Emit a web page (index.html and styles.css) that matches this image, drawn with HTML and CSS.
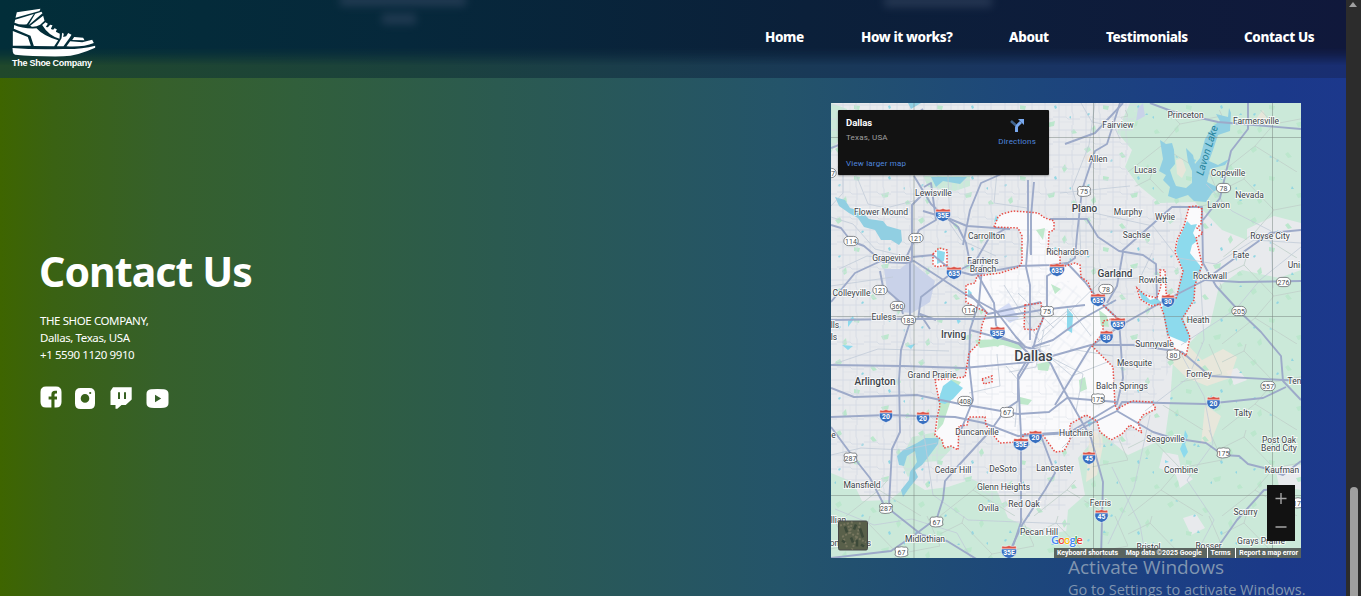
FILE: index.html
```html
<!DOCTYPE html>
<html lang="en">
<head>
<meta charset="utf-8">
<title>The Shoe Company</title>
<link rel="stylesheet" href="styles.css">
</head>
<body>
<div class="window">
<div class="page">
<header class="header">
  <i class="haze haze-a"></i><i class="haze haze-b"></i><i class="haze haze-c"></i>
  <a class="brand">
    <svg class="shoe" viewBox="36 25 251 147" aria-hidden="true">
      <g fill="#fff">
        <path d="M50 38L121 27L118 34L46 54ZM45 60L101 43L80 74Q60 77 43 69ZM105 42L124 36L127 41L85 77ZM90 78L129 48L133 63L120 75Q108 82 95 81Z"/>
        <path d="M42 76Q68 88 109 86Q128 108 174 122L162 140L101 139L91 108L41 87ZM38 94L83 112L92 138H38Z"/>
        <path d="M126 76L136 68L143 72L137 82L143 83L150 75L157 77L152 88L159 90L163 86L170 89L167 96L179 102L178 117Q145 108 126 76ZM186 99L191 102L189 112L198 110L204 100L214 105L208 115L190 140L170 140L184 116ZM222 112L249 114L253 122L216 121ZM210 125L246 128L276 120L281 130Q250 143 199 140ZM37 145Q105 151 190 148Q245 149 285 138L285 144Q230 169 190 170Q100 171 45 165Q39 164 38 157Z"/>
      </g>
    </svg>
    <span class="brand-name">The Shoe Company</span>
  </a>
  <nav class="nav"><a>Home</a><a>How it works?</a><a>About</a><a>Testimonials</a><a>Contact Us</a></nav>
</header>
<main class="contact">
  <section class="details">
    <h1>Contact Us</h1>
    <p>THE SHOE COMPANY,<br>Dallas, Texas, USA<br>+1 5590 1120 9910</p>
    <div class="social">
      <svg class="fb" viewBox="0 0 22 22"><path fill="#fff" fill-rule="evenodd" d="M6 .5H16Q21.5 .5 21.5 6V16Q21.5 21.5 16 21.5H14.5V13.5H17V10.5H14.5V9Q14.5 7.6 16 7.6H17V4.8H15Q11.4 4.8 11.4 8.4V10.5H8.6V13.5H11.4V21.5H6Q.5 21.5 .5 16V6Q.5 .5 6 .5Z"/></svg>
      <svg class="ig" viewBox="0 0 20 21"><path fill="#fff" fill-rule="evenodd" d="M5.5 0H14.5Q20 0 20 5.5V15.5Q20 21 14.5 21H5.5Q0 21 0 15.5V5.5Q0 0 5.5 0ZM10 6.1A4.3 4.3 0 1 0 10 14.7A4.3 4.3 0 0 0 10 6.1ZM15.2 3.9A1.1 1.1 0 1 0 15.2 6.1A1.1 1.1 0 0 0 15.2 3.9Z"/></svg>
      <svg class="tw" viewBox="0 0 22 22"><path fill="#fff" fill-rule="evenodd" d="M3 .3H21.7V12.5L15.7 18H11.5L7.3 21.7H5.5V18H.5V4ZM8 5.2V12H10V5.2ZM14 5.2V12H16V5.2Z"/></svg>
      <svg class="yt" viewBox="0 0 23 19"><path fill="#fff" fill-rule="evenodd" d="M5 .3Q11.5 -.3 18 .3Q22.5 .7 22.5 5V14Q22.5 18.3 18 18.7Q11.5 19.3 5 18.7Q.5 18.3 .5 14V5Q.5 .7 5 .3ZM9 5.8V13.2L15.2 9.5Z"/></svg>
    </div>
  </section>
  <section class="map">
  <svg class="map-art" viewBox="831 103 470 455">
    <defs>
      <pattern id="streets" width="27" height="25" patternUnits="userSpaceOnUse"><path d="M0 5H27M0 17H13L15 19H27M6 0V25M19 0V12L20 14V25" fill="none" stroke="#d3d9e3" stroke-width=".8"/><path d="M0 11H6M13 5V17M6 22H20" fill="none" stroke="#dbe0e8" stroke-width=".6"/></pattern>
      <pattern id="streets2" width="17" height="15" patternUnits="userSpaceOnUse" patternTransform="rotate(38)"><path d="M0 4H17M5 0V15M12 4V15" fill="none" stroke="#d3dae6" stroke-width=".7"/></pattern>
      <pattern id="specks" width="83" height="71" patternUnits="userSpaceOnUse"><path d="M5 7l5-3 2 4-4 3zM40 12l3-2 4 5-4 1zM24 34l6 1-1 4-5-1zM66 26l3-4 2 5-3 4zM51 52l8-2-1 5-5 1zM12 58l4-4 1 6-3 2zM75 60l3-2 3 4-5 1z" fill="#bce7cd"/><path d="M31 19l2-2 1 2-2 1zM58 35l2-1 1 3-2 1zM8 43l2-1 1 1-2 2zM73 46l2-1v3z" fill="#91d6e3"/></pattern>
      <pattern id="rural" width="94" height="86" patternUnits="userSpaceOnUse"><path d="M0 18L22 7L52 38L94 30M22 7L24 0M52 38L33 60L0 86M33 60L75 86M94 30L81 0" fill="none" stroke="#bfcfc9" stroke-width=".8"/><path d="M17 29l2-2 1 2zM69 17l1-3 2 3zM47 71l2-1 1 2zM82 53l2-2v3z" fill="#92d5df"/></pattern>
      <g id="hwy"><path d="M-6-6Q-3-5 0-6.500Q3-5 6-6L6.500-3H-6.500Z" fill="#dc5549" stroke="#fff" stroke-width=".5"/><path d="M-6.500-3H6.500Q8 4 0 6.600Q-8 4-6.500-3Z" fill="#386fc0" stroke="#fff" stroke-width=".5"/></g>
      <g id="hwy3"><path d="M-7-6Q-3-5 0-6.500Q3-5 7-6L7.500-3H-7.500Z" fill="#dc5549" stroke="#fff" stroke-width=".5"/><path d="M-7.500-3H7.500Q9 4 0 6.600Q-9 4-7.500-3Z" fill="#386fc0" stroke="#fff" stroke-width=".5"/></g>
      <rect id="oval" x="-7.2" y="-4.6" width="14.4" height="9.2" rx="4.6" fill="#fff" stroke="#686c70" stroke-width=".8"/>
      <path id="us" d="M-5-5Q-2.5-4.5 0-5.3Q2.5-4.5 5-5L6.5-3Q5.5 0 6.5 3Q4 5-1 5Q-5 5-6.5 3Q-5.5 0-6.5-3Z" fill="#fff" stroke="#686c70" stroke-width=".8"/>
      <path id="limits" d="M994 227L998 217L1002 214L1013 211L1027 212L1038 213L1045 218L1054 221L1054 230L1049 232L1048 252L1060 256V267L1065 266L1075 263L1080 265L1081 277L1088 282L1092 293L1103 305L1117 318L1103 321V333L1092 346L1113 367L1115 405L1117 409L1132 401L1152 402L1156 409L1143 415L1138 423L1142 433L1130 425L1122 434L1111 440L1100 432L1097 421L1086 415L1070 424L1070 440L1064 451L1055 452L1045 438L1041 434L1025 434L1018 442L1000 443L994 436L986 425L985 417H969L967 425L959 426L958 450L951 446L944 448L942 440L935 435L937 418L940 405L937 390L935 380L955 378L965 377L969 353L979 343L982 325L987 312L975 307L966 302V285L975 283L977 276L1000 273L1019 267L1022 262V236L1018 228ZM933 254L939 248L947 250V265L936 267L933 264ZM1189 207L1196 206L1202 209L1201 224L1197 228L1203 233L1196 238L1200 255L1202 265L1195 285L1194 300L1182 319L1190 337L1186 356L1174 348L1168 335L1164 315L1160 304L1151 306L1140 299L1137 288L1145 295L1157 298L1161 286L1160 270L1165 270L1166 293L1176 299L1183 271L1175 252L1177 240L1184 226Z"/>
    </defs>
    <path d="M831 103H1301V558H831Z" fill="#e8eaed"/>
    <g fill="#cbe9d9">
      <path d="M1130 103H1301V235L1270 224L1247 240L1222 230L1195 202L1160 203L1138 185L1125 167L1132 150L1117 132Z"/>
      <path d="M1197 335L1210 325L1219 286L1242 270L1279 278L1301 270V558H1064L1068 510L1085 495L1078 458L1100 432L1128 455L1165 438L1170 402L1173 361Z"/>
      <path d="M831 473L853 482L862 501L890 500L912 482L925 490L948 487L972 479L997 491L1008 518L1044 535L1071 530L1078 558H831ZM831 103L847 109L843 132L831 153ZM923 176H970V186L955 191L928 187ZM912 437L946 430L957 443L940 461L925 462L908 477L900 461Z"/>
    </g>
    <g fill="#e8eaed"><path d="M1163 452L1178 455L1181 469L1193 479L1180 488L1176 475L1159 468ZM1226 371L1237 368L1247 380L1234 385ZM1247 229L1274 216L1301 223V247L1262 257L1247 247ZM1183 518L1196 514L1205 528L1191 535ZM1275 467L1301 465V490L1279 486Z"/></g>
    <g fill="#efe6db" opacity=".8"><path d="M1166 358L1187 344L1202 360L1223 349L1237 357L1230 378L1207 386L1187 378ZM1090 430L1102 435L1103 446L1097 475L1086 482ZM1205 405L1221 416L1211 442L1201 444L1203 425ZM1083 157L1094 151L1090 164ZM874 142L885 145L881 164L872 162ZM1255 120L1263 110L1270 127Z"/><path d="M1176 160L1182 158L1186 170L1182 178L1177 174Z"/></g>
    <path d="M831 103H1301V558H831Z" fill="url(#specks)"/>
    <path d="M831 103H1138L1125 167L1145 197L1190 207L1180 260L1185 340L1130 445L1070 450L1065 510H1000L970 480L915 484L880 504L831 470Z" fill="url(#streets)"/>
    <path d="M1120 110H1301V558H1070L1100 436L1170 402L1210 325L1225 260L1195 200L1130 185ZM831 480H1080V558H831Z" fill="url(#rural)"/>
    <path d="M884 269L900 269L910 261L935 281L930 302L912 313L901 312L893 295L887 290ZM1138 108L1143 103L1145 116L1136 121Z" fill="#c9d2e9"/>
    <use href="#limits" fill="#fafafc"/>
    <path d="M1025 305L1041 303L1043 320L1036 330L1024 329ZM982 379L992 376L992 382L984 384Z" fill="#e8eaed"/>
    <g opacity=".55"><path d="M992 229H1048V300L1030 320L987 312ZM980 328L1040 340L1105 405L1086 415L1066 440L1000 438L970 405Z" fill="url(#streets)"/><path d="M996 290L1075 280L1100 350L1060 400L1010 340Z" fill="url(#streets2)"/></g>
    <path d="M975 340L1003 339L1024 345L1021 350L1003 345L980 348ZM1037 364L1051 361L1048 371L1038 370ZM1099 310L1107 316L1109 327L1101 326ZM1051 284L1061 289L1055 294ZM952 379L961 382L947 402L940 394ZM1036 230L1045 228L1043 240ZM993 338L1003 341L998 347L990 344ZM1079 380L1085 377L1087 389L1080 392ZM1020 397L1032 400L1028 405L1020 404ZM940 401L951 400L943 424L937 431Z" fill="#bfe8cb"/>
    <path d="M996 311L1009 303L1019 318L1010 323Z" fill="#d4dcf5"/>
    <g fill="#91cfe2">
      <path d="M835 197L845 200L850 208L861 211L869 219L883 221L887 226L901 230L902 241L899 245L891 240L881 240L875 230L864 227L858 218L849 213L839 206Z"/>
      <path d="M931 177H967L960 184L943 181L936 187ZM908 103H921L911 109Z"/>
      <path d="M1160 140L1166 144L1172 143L1174 150L1175 164L1170 170L1173 179L1176 186L1186 188L1192 183L1192 171L1188 162L1186 148L1193 155L1195 164L1200 158L1205 139L1213 126L1220 121L1216 114L1228 117L1229 108L1231 113L1230 131L1218 135L1213 150L1209 161L1218 165L1229 159L1225 165L1210 169L1207 182L1219 188L1212 193L1206 202L1194 201L1188 195L1176 199L1168 196L1170 187L1163 180L1166 175L1159 171L1163 159Z"/>
      <path d="M899 465L897 456L903 450L917 443L925 438L939 438L938 444L929 456L922 465L915 470L918 477L910 487L903 497L901 490L909 480L910 472L917 462L915 451L907 456L904 466Z"/>
    </g>
    <g fill="#8ddaed">
      <path d="M1187 221L1191 225L1197 224L1193 233L1197 241L1192 245L1190 253L1202 268L1195 285L1194 299L1183 318L1190 337L1186 343L1167 335L1162 307L1170 296L1176 298L1183 271L1176 251L1178 240ZM1138 289L1145 295L1150 300L1157 298L1162 303L1152 305L1142 300ZM943 386L951 380L963 388L953 399L945 404L938 402ZM937 250L945 252L944 261L937 264ZM1067 308L1073 315L1072 333L1067 330Z"/>
      <path d="M842 345l11 1-5 4zM907 346l8-2-4 5zM956 318l5 3-3 3zM968 289l4 4-4 5zM996 215l2 5-4 2zM1056 268l2 5-3 2zM1087 421l7 1-5 5zM1185 430l3 6-3 8 3 8-4 6-4-9 3-7zM848 321l5-5 1 3-6 8zM1165 460l4 2-4 1z"/>
    </g>
    <g class="lanes">
      <path d="M831 217L853 224L875 249L911 258M839 269L867 256L912 262M831 286L893 277M831 365L878 349L949 351M857 177L868 204L886 208L917 200M843 153V193L831 206M947 153L950 224L961 240L996 256M982 152L997 172L994 203L1027 208L1030 254M1081 103L1092 122L1114 126L1120 139M1094 213L1153 226L1178 258L1216 264L1254 240L1301 243M1095 103L1089 145L1072 188L1079 212L1081 257M831 455L861 448L903 450L937 443M1200 270L1204 340L1188 378L1145 411M1181 345L1236 309L1260 280L1301 247M1181 354L1204 396L1213 444L1187 480L1214 520L1194 558M1150 415L1134 488L1108 544M835 509L874 525L912 519L957 533L971 558M924 435L933 495L968 520L1070 524M1112 467L1140 525L1145 553M1206 184L1232 211L1271 231L1273 288M1060 193L1130 186M1060 231H1170M1100 280L1140 278L1152 253"/>
      <path d="M1038 342L1100 282M1018 293L1054 328M1004 285L1039 340M1009 372L1036 367L1044 330M1011 332L1029 349L1050 345M1008 321L1045 315M1034 344L1072 376L1110 361M1048 356L1083 374L1076 411M1015 427L1019 381L1006 366M1070 349L1113 356M1042 331L1070 309L1091 336M997 354L1000 386L969 393M1086 424L1062 448"/>
    </g>
    <g class="roads">
      <path d="M1120 103L1107 144L1095 151L1082 190L1077 235L1075 258L1059 269L1047 276V308L1037 334L1030 360L1018 380V401L1006 409L991 430L958 466L945 481L943 499L937 518L913 536L891 551L831 558"/>
      <path d="M831 225L841 228L851 241L864 246L883 262L906 263L914 261L945 281L965 294L996 311L1016 337L1025 347L1039 350L1051 364L1065 392L1091 438L1103 482L1101 558"/>
      <path d="M914 176L931 204L944 216L958 227L966 243L969 258L983 284L994 303L996 325L1001 337L1019 344L1030 355L1018 375L1021 435V522L1009 558"/>
      <path d="M831 320L898 319L936 319H980L1005 316L1041 310L1085 305M1055 405L1091 346L1123 324L1162 302L1205 280L1235 258L1270 233L1301 230"/>
      <path d="M831 365L903 366L963 368L1031 362L1091 345L1133 345L1182 352L1210 376L1301 381"/>
      <path d="M831 388L854 397L917 395L960 404L984 408L1018 414L1049 412L1067 398L1117 402"/>
      <path d="M831 417L887 415L955 417L984 423L1018 436L1072 433L1117 411L1122 402L1205 404L1263 398L1286 387"/>
      <path d="M910 257V322L901 350L899 380L900 432L892 449L889 505"/>
      <path d="M912 261V205L924 193M912 257L933 255L950 269L972 275L1019 266L1051 265L1067 263L1085 282L1101 303L1119 320L1123 378L1117 404L1092 419L1070 432L1021 435"/>
      <path d="M924 187L931 183L936 220L919 230L906 258M831 302L855 273L883 260M880 271L883 287L899 301L903 314M936 320L920 314L930 329M918 320L921 297L948 276L975 262L989 238L1005 229M923 211L950 219L967 226L1010 229"/>
      <path d="M963 245L970 210L981 183L1006 172M1028 180V240L1026 267L1030 285V340M1034 182L1031 216V255M1050 219L1087 219L1098 237L1119 251L1143 255L1156 264L1157 300"/>
      <path d="M1122 251L1172 207L1202 207L1203 263L1216 286L1239 311L1261 332L1281 356L1283 381L1301 400M1203 220L1220 198L1231 151L1248 129L1248 103M1205 280L1239 282L1301 281"/>
      <path d="M831 148L869 133L898 127L923 109M1065 144L1095 133L1123 103M1150 103L1174 112L1218 122L1301 129M1123 252L1117 286L1107 303"/>
      <path d="M831 427L851 454L870 478L884 505L922 535L947 541L978 560M1117 411L1153 432L1172 438L1206 443L1223 455L1239 456L1248 464L1264 468L1283 475L1301 461M1218 547L1237 520L1264 490L1277 489"/>
      <path d="M983 257L979 302L970 330L969 364L973 400L961 430M970 330L1022 344M1032 347L1053 340L1082 319L1116 300M970 294L988 314L1016 308L1041 302M1009 553L1022 525L1045 490L1055 473L1041 436"/>
    </g>
    <use class="border" href="#limits"/>
    <path class="border" d="M1025 305L1041 303L1043 320L1036 330L1024 329ZM982 379L992 376L992 382L984 384Z"/>
    <path d="M914 103V558M1093.5 103V558M1272.5 103V558M831 137.5H1301M831 316.5H1301M831 495.5H1301" stroke="#76827d" stroke-opacity=".62" stroke-width=".8"/>
    <g class="shields">
      <use href="#hwy3" x="943" y="215"/><use href="#hwy3" x="954" y="273"/><use href="#hwy3" x="1057" y="270"/><use href="#hwy3" x="1098" y="300"/><use href="#hwy3" x="1118" y="324"/><use href="#hwy3" x="997.5" y="333"/><use href="#hwy" x="1168" y="301"/><use href="#hwy" x="1106.5" y="337"/><use href="#hwy" x="886" y="416"/><use href="#hwy" x="923" y="418"/><use href="#hwy" x="1035.5" y="437"/><use href="#hwy3" x="1021" y="444.5"/><use href="#hwy" x="1213.5" y="403"/><use href="#hwy" x="1089" y="458"/><use href="#hwy" x="1101.5" y="516"/><use href="#hwy3" x="1009" y="552"/>
      <use href="#oval" x="851" y="241"/><use href="#oval" x="916" y="238"/><use href="#oval" x="880" y="290"/><use href="#oval" x="897.5" y="306"/><use href="#oval" x="908.5" y="320"/><use href="#oval" x="969.5" y="310"/><use href="#oval" x="1106" y="289"/><use href="#oval" x="965" y="401"/><use href="#oval" x="1223.5" y="188"/><use href="#oval" x="1283.5" y="282"/><use href="#oval" x="1239" y="311"/><use href="#oval" x="1268" y="386"/><use href="#oval" x="829" y="173"/>
      <use href="#us" x="1084" y="191.5"/><use href="#us" x="1047" y="311.5"/><use href="#us" x="1173.5" y="355"/><use href="#us" x="1098" y="399"/><use href="#us" x="1007" y="412.5"/><use href="#us" x="850.5" y="458"/><use href="#us" x="886" y="508.5"/><use href="#us" x="936.5" y="522"/><use href="#us" x="901.5" y="552"/><use href="#us" x="1223.5" y="453"/><use href="#us" x="1298" y="503"/>
    </g>
    <g class="num blue"><text x="943" y="217.5">35E</text><text x="954" y="275.5">635</text><text x="1057" y="272.5">635</text><text x="1098" y="302.5">635</text><text x="1118" y="326.5">635</text><text x="997.5" y="335.5">35E</text><text x="1168" y="303.5">30</text><text x="1106.5" y="339.5">30</text><text x="886" y="418.5">20</text><text x="923" y="420.5">20</text><text x="1035.5" y="439.5">20</text><text x="1021" y="447">35E</text><text x="1213.5" y="405.5">20</text><text x="1089" y="460.5">45</text><text x="1101.5" y="518.5">45</text><text x="1009" y="554.5">35E</text></g>
    <g class="num"><text x="851" y="243.5">114</text><text x="916" y="240.5">121</text><text x="880" y="292.5">121</text><text x="897.5" y="308.5">360</text><text x="908.5" y="322.5">183</text><text x="969.5" y="312.5">114</text><text x="1106" y="291.5">78</text><text x="965" y="403.5">408</text><text x="1223.5" y="190.5">78</text><text x="1283.5" y="284.5">276</text><text x="1239" y="313.5">205</text><text x="1268" y="388.5">557</text><text x="833" y="175.5">7</text><text x="1084" y="194">75</text><text x="1047" y="314">75</text><text x="1173.5" y="357.5">80</text><text x="1098" y="401.5">175</text><text x="1007" y="415">67</text><text x="850.5" y="460.5">287</text><text x="886" y="511">287</text><text x="936.5" y="524.5">67</text><text x="901.5" y="554.5">67</text><text x="1223.5" y="455.5">175</text><text x="1297" y="505.5">17</text></g>
    <g class="label">
      <text x="1118" y="127.5">Fairview</text><text x="1185.5" y="117.5">Princeton</text><text x="1256" y="123.5">Farmersville</text><text x="1098" y="161.5">Allen</text><text x="1145.5" y="172.5">Lucas</text><text x="1228" y="176">Copeville</text><text x="1249.5" y="198">Nevada</text><text x="1218.5" y="207.5">Lavon</text><text x="1128" y="214.5">Murphy</text><text x="1165" y="220">Wylie</text><text x="1136.5" y="238">Sachse</text><text x="1270" y="239">Royse City</text><text x="933.5" y="195.5">Lewisville</text><text x="881" y="215">Flower Mound</text><text x="986.5" y="239">Carrollton</text><text x="1067.5" y="255">Richardson</text><text x="891" y="260.5">Grapevine</text><text x="983" y="264">Farmers</text><text x="983" y="272">Branch</text><text x="1241" y="258">Fate</text><text x="1294" y="268">Uni</text><text x="851.5" y="296">Colleyville</text><text x="1153" y="283">Rowlett</text><text x="1210" y="278.5">Rockwall</text><text x="884" y="320">Euless</text><text x="1198" y="323">Heath</text><text x="835" y="328">lls</text><text x="834" y="339.5">ls</text><text x="1154.5" y="347">Sunnyvale</text><text x="1134.5" y="365.5">Mesquite</text><text x="932" y="378">Grand Prairie</text><text x="1199" y="376.5">Forney</text><text x="1122" y="388.5">Balch Springs</text><text x="1294.5" y="383.5">Ten</text><text x="977" y="434.5">Duncanville</text><text x="1076" y="436">Hutchins</text><text x="1243" y="416">Talty</text><text x="1165.5" y="442">Seagoville</text><text x="1279" y="442.5">Post Oak</text><text x="1279" y="451">Bend City</text><text x="833.5" y="438">e</text><text x="953" y="473">Cedar Hill</text><text x="1003" y="472">DeSoto</text><text x="1055" y="471">Lancaster</text><text x="1181" y="473">Combine</text><text x="1282" y="473">Kaufman</text><text x="862" y="488">Mansfield</text><text x="1003.5" y="490">Glenn Heights</text><text x="988.5" y="511">Ovilla</text><text x="1024" y="506.5">Red Oak</text><text x="1100.5" y="506">Ferris</text><text x="1245.5" y="515">Scurry</text><text x="838.5" y="522.5">llian</text><text x="834.5" y="546">on</text><text x="869" y="546">s</text><text x="925" y="541.5">Midlothian</text><text x="1039" y="534.5">Pecan Hill</text><text x="1148.5" y="549.5">Bristol</text><text x="1208.5" y="548.5">Rosser</text><text x="1261" y="544">Grays Prairie</text>
      <text class="town" x="1084.5" y="212">Plano</text><text class="town" x="1115" y="276.5">Garland</text><text class="town" x="953.5" y="337.5">Irving</text><text class="town" x="875" y="385">Arlington</text><text class="dallas" x="1033.5" y="361">Dallas</text>
    </g>
    <text class="lake" transform="translate(1203 176) rotate(-73)">Lavon Lake</text>
    <text class="google" x="1051" y="543.5" textLength="32"><tspan fill="#4285f4">G</tspan><tspan fill="#ea4335">o</tspan><tspan fill="#fbbc04">o</tspan><tspan fill="#4285f4">g</tspan><tspan fill="#34a853">l</tspan><tspan fill="#ea4335">e</tspan></text>
  </svg>
  <div class="place-card">
    <div><strong>Dallas</strong><span class="region">Texas, USA</span><a>View larger map</a></div>
    <div class="directions"><svg viewBox="0 0 14 13"><path d="M1 2L6 6.5" stroke="#42658f" stroke-width="2.5" fill="none"/><path d="M6.5 13V8.5Q6.5 7 8 5.8L11 3" stroke="#79a9ef" stroke-width="3" fill="none"/><path d="M8 0H14V6Z" fill="#79a9ef"/></svg><a>Directions</a></div>
  </div>
  <svg class="satellite" viewBox="0 0 30 30"><rect x=".5" y=".5" width="29" height="29" rx="1.5" fill="#59604a" stroke="#484848"/><path d="M2 5L10 3L12 12L5 16L9 27M14 1L12 12L19 17L14 29M22 2L19 17L28 22" stroke="#77765f" stroke-width="2" fill="none" stroke-dasharray="2 1.5"/><path d="M7 6L9 12M18 4L16 9M4 20L7 22M22 8L25 17M13 17L15 22M23 24L26 26M19 19V26" stroke="#3c4939" stroke-width="2.5"/></svg>
  <svg class="zoom" viewBox="0 0 28 56"><path fill="#121212" d="M0 0H28V56H0Z"/><path d="M8.500 13.500H19.500M14 8V19M8.500 42H19.500" stroke="#a5a5a5" stroke-width="1.4"/></svg>
  <div class="legal"><span>Keyboard shortcuts</span><span>Map data ©2025 Google</span><span>Terms</span><span>Report a map error</span></div>
  </section>
</main>
</div>
<aside class="scrollbar"><i class="arrow"></i><i class="thumb"></i></aside>
<div class="watermark"><b>Activate Windows</b><span>Go to Settings to activate Windows.</span></div>
</div>
</body>
</html>
```
FILE: styles.css
```css
*{box-sizing:border-box}
body{margin:0;overflow:hidden;font-family:"Noto Sans","Open Sans",sans-serif;color:#fff}
.window{position:relative;display:flex;width:1361px;height:596px;overflow:hidden}
.page{width:1346px;height:596px;display:flex;flex-direction:column;background:linear-gradient(90deg,#3e6500 0,#3a6213 4%,#36602b 12%,#315f3b 22%,#2b5a50 37%,#24546a 58%,#1d477b 76%,#1b3989 95%,#1c388c 100%)}
.header{position:relative;height:78px;flex:none;display:flex;justify-content:space-between;overflow:hidden;background:linear-gradient(90deg,#20482b,#1b423c 30%,#193957 60%,#192e72)}
.header::before{content:"";position:absolute;inset:0;background:linear-gradient(90deg,#022e39,#06283b 30%,#0b203a 60%,#10183b);-webkit-mask-image:linear-gradient(#000 61%,rgba(0,0,0,.75) 69%,transparent 84%);mask-image:linear-gradient(#000 61%,rgba(0,0,0,.75) 69%,transparent 84%)}
.haze{position:absolute;background:#3a4b66;opacity:.55;filter:blur(4px)}
.haze-a{left:340px;top:-5px;width:126px;height:11px}
.haze-b{left:382px;top:14px;width:34px;height:10px}
.haze-c{left:884px;top:-4px;width:108px;height:11px}
.brand{position:relative;padding:8px 0 0 12px;display:flex;flex-direction:column}
.shoe{width:84px;height:49px}
.brand-name{font:bold 9px/11px "Liberation Sans",sans-serif;margin-top:1px;letter-spacing:-.27px;white-space:nowrap}
.nav{position:relative;display:grid;grid-template-columns:96px 148px 97px 138px 102px;height:74px;align-items:center;white-space:nowrap;font-size:13.500px;font-weight:800;letter-spacing:-.38px}
.contact{flex:1;display:flex;justify-content:space-between;padding:25px 45px 38px 40px}
.details{display:flex;flex-direction:column;padding-top:138px}
h1{font-size:41px;line-height:60px;margin:0 0 11px -1px;letter-spacing:-.92px;white-space:nowrap}
.details p{font-size:11.500px;line-height:17px;margin:0;letter-spacing:-.4px}
.social{display:flex;margin-top:22px;height:26px;align-items:flex-start}
.social svg{display:block}
.fb{width:22px;height:22px;margin-top:1px}
.ig{width:20px;height:21px;margin:3px 0 0 13px}
.tw{width:22px;height:22px;margin:2px 0 0 15px}
.yt{width:23px;height:19px;margin:4px 0 0 14px}
.map{position:relative;width:470px;height:455px;overflow:hidden}
.map-art{display:block;width:470px;height:455px}
.border{fill:none;stroke:#e84c45;stroke-width:1.5;stroke-dasharray:1.5 1.6}
.lanes{fill:none;stroke:#c2cbd8;stroke-width:.8}
.roads{fill:none;stroke:#9daac9;stroke-width:1.9;stroke-linejoin:round}
.label{font:8.500px Roboto,sans-serif;text-anchor:middle;fill:#3c4349;stroke:#fff;stroke-width:1.8px;stroke-opacity:.8;paint-order:stroke}
.town{font-size:10px;font-weight:500}
.dallas{font-size:14px;font-weight:500}
.num{font:7px Roboto,sans-serif;text-anchor:middle;fill:#494d51}
.blue{fill:#fff;font-weight:700;font-size:6.800px}
.lake{font:italic 10.500px Roboto,sans-serif;fill:#27849c}
.google{font:600 11.500px "Open Sans",sans-serif;stroke:#fff;stroke-width:1px;paint-order:stroke}
.place-card{position:absolute;left:7px;top:7px;width:211px;height:65px;background:#121212;border-radius:1px;display:flex;justify-content:space-between;padding:7px 13px 0 8px;font:8px/12px Roboto,sans-serif;box-shadow:0 1px 2px #0005}
.place-card div:first-child{display:flex;flex-direction:column}
.place-card strong{font-size:9.500px}
.region{color:#a0a0a0;margin-top:3px;letter-spacing:.2px}
.place-card a{color:#4f86df;letter-spacing:.18px}
.region+a{margin-top:14px}
.directions{display:flex;flex-direction:column;align-items:center;padding-top:2px}
.directions svg{width:14px;height:13px;margin-bottom:4px}
.satellite{position:absolute;left:7px;top:417px;width:30px;height:31px}
.zoom{position:absolute;right:6px;top:382px;width:28px;height:56px}
.legal{position:absolute;right:0;bottom:0;width:247px;height:10px;background:#464c4ad9;display:flex;justify-content:space-between;font:bold 7px/10px Roboto,sans-serif;white-space:nowrap;letter-spacing:-.03px}
.legal span{padding:0 3px}
.legal span:nth-child(n+3){border-left:1px solid #fff}
.scrollbar{width:15px;background:#2c2c2c;position:relative}
.arrow{position:absolute;left:3px;top:2px;border:4.500px solid transparent;border-top:0;border-bottom:5px solid #a0a0a0}
.thumb{position:absolute;left:4px;top:487px;width:8px;height:120px;border-radius:4px;background:#9f9f9f}
.watermark{position:absolute;left:1068px;top:555px;display:flex;flex-direction:column;color:#8095b0;font-family:"Open Sans",sans-serif;white-space:nowrap}
.watermark b{font-size:19px;line-height:25px;font-weight:400}
.watermark span{font-size:14.500px;line-height:20px}
```
